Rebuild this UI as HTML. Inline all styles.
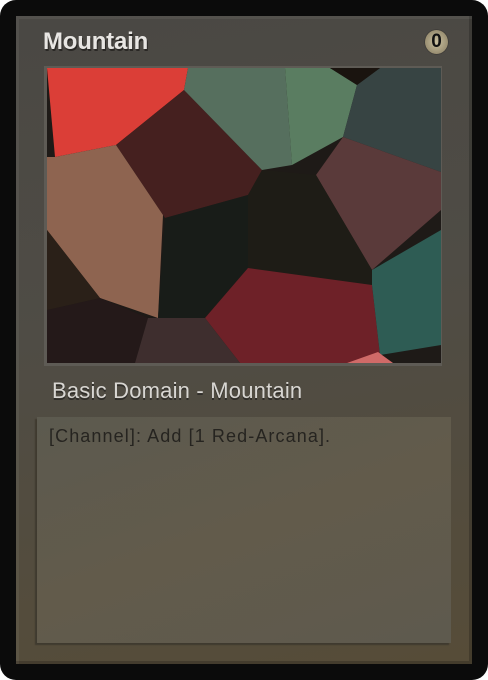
<!DOCTYPE html>
<html><head><meta charset="utf-8"><style>
html,body{margin:0;padding:0;width:488px;height:680px;background:#fff;overflow:hidden}
.card{position:absolute;left:0;top:0;width:488px;height:680px;background:#0b0b0b;border-radius:16px}
.panel{position:absolute;left:16px;top:16px;width:456px;height:648px;background:linear-gradient(170deg,#4a4844 0%,#4f4c45 45%,#564c38 100%);box-shadow:inset 3px 3px 0 rgba(255,255,255,0.05),inset -3px -3px 0 rgba(0,0,0,0.2)}
.title{position:absolute;left:43px;top:28px;font:bold 24px "Liberation Sans",sans-serif;color:#e8e6e3;text-shadow:1px 2px 0 #2a2825;letter-spacing:-0.2px}
.cost{position:absolute;left:425px;top:30px;width:23px;height:24px;border-radius:50%;background:radial-gradient(circle,#c9bf9f 0%,#8f8468 85%);box-shadow:0 0 1px #000}
.cost span{position:absolute;left:0;width:23px;top:1px;text-align:center;font:bold 19px "Liberation Sans",sans-serif;color:#111}
.art{position:absolute;left:44px;top:66px;width:398px;height:300px;background:#5e5b55}
.art svg{position:absolute;left:3px;top:2px}
.type{position:absolute;left:52px;top:378px;font:22px "Liberation Sans",sans-serif;color:#d8d6d2;text-shadow:0 2px 0 #2f2d29;letter-spacing:0.2px}
.box{position:absolute;left:37px;top:417px;width:414px;height:226px;background:linear-gradient(160deg,#5c5a4f 0%,#625b4b 50%,#5e5a4e 100%);box-shadow:-2px 2px 1px #3f3a2f}
.rules{position:absolute;left:49px;top:426px;font:18px "Liberation Sans",sans-serif;color:#262420;letter-spacing:1.1px}
</style></head><body>
<div class="card"></div>
<div class="panel"></div>
<div class="title">Mountain</div>
<div class="cost"><span>0</span></div>
<div class="art"><svg width="394" height="295" viewBox="47 68 394 295">
<rect x="47" y="68" width="394" height="295" fill="#1e1a17"/>
<polygon points="47,68 188,68 184,90 116,145 55,157" fill="#db3e37"/>
<polygon points="116,145 184,90 262,170 248,195 165,218" fill="#45201f"/>
<polygon points="188,68 285,68 292,165 262,170 184,90" fill="#566f5e"/>
<polygon points="285,68 330,68 357,85 343,137 292,165" fill="#5a7d61"/>
<polygon points="357,85 380,68 441,68 441,172 343,137" fill="#374443"/>
<polygon points="330,68 380,68 357,85" fill="#1a140f"/>
<polygon points="343,137 441,172 441,210 372,270 316,175" fill="#5a3a3a"/>
<polygon points="262,170 316,175 372,270 372,285 248,268 248,195" fill="#1e1c16"/>
<polygon points="47,157 55,157 116,145 163,215 158,318 100,298 47,230" fill="#8e6450"/>
<polygon points="165,218 248,195 248,268 205,318 158,318" fill="#181c18"/>
<polygon points="248,268 372,285 380,355 347,363 240,363 205,318" fill="#6e2128"/>
<polygon points="372,270 441,230 441,345 380,355 372,285" fill="#2e5c54"/>
<polygon points="347,363 378,352 393,363" fill="#d06a68"/>
<polygon points="47,310 100,298 148,318 135,363 47,363" fill="#241919"/>
<polygon points="148,318 205,318 240,363 135,363" fill="#3e2e2e"/>
<polygon points="47,230 100,298 47,310" fill="#2a2018"/>
</svg></div>
<div class="type">Basic Domain - Mountain</div>
<div class="box"></div>
<div class="rules">[Channel]: Add [1 Red-Arcana].</div>
</body></html>
